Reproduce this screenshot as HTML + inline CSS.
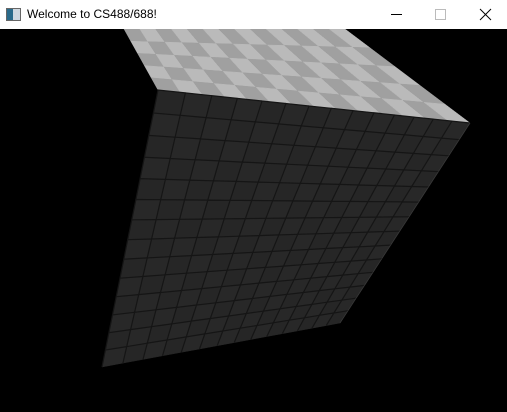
<!DOCTYPE html>
<html><head><style>
html,body{margin:0;padding:0;width:507px;height:412px;overflow:hidden;background:#000;font-family:"Liberation Sans",sans-serif}
#bar{position:absolute;left:0;top:0;width:507px;height:29px;background:#fff}
#bar .t{position:absolute;left:27px;top:7px;font-size:12px;color:#000}
#ic{position:absolute;left:6px;top:8px;width:13px;height:11px;border:1px solid #666;background:linear-gradient(90deg,#2a6a8a 0 45%,#cfd8e0 45%)}
svg{position:absolute;left:0;top:29px}
</style></head><body>
<div id="bar"><div id="ic"></div><div class="t">Welcome to CS488/688!</div>
<svg style="position:absolute;left:385px;top:0" width="120" height="29">
<line x1="6" y1="14.5" x2="17" y2="14.5" stroke="#000" stroke-width="1"/>
<rect x="50.5" y="9.5" width="10" height="10" fill="none" stroke="#bbb"/>
<line x1="95" y1="9" x2="106" y2="20" stroke="#000"/><line x1="106" y1="9" x2="95" y2="20" stroke="#000"/>
</svg></div>
<svg id="s" width="507" height="383" viewBox="0 29 507 383"></svg>
<script>
var s=document.getElementById('s'),h='';
function L(a,b,t){return[a[0]+(b[0]-a[0])*t,a[1]+(b[1]-a[1])*t]}
function pw(t,k){return t/(k-(k-1)*t)}
function face(p00,p10,p11,p01,n,m,ku,kv,c1,c2,st,sl){
 var P=function(u,v){u=pw(u,ku);v=pw(v,kv);return L(L(p00,p10,u),L(p01,p11,u),v)};
 for(var i=0;i<n;i++)for(var j=0;j<m;j++){
  var q=[P(i/n,j/m),P((i+1)/n,j/m),P((i+1)/n,(j+1)/m),P(i/n,(j+1)/m)];
  var f=function(x){return x[0].toFixed(1)+','+x[1].toFixed(1)};
  h+='<polygon points="'+q.map(f).join(' ')+'" fill="'+((i+j)%2?c1:c2)+'" stroke="'+((i+j)%2?c1:c2)+'" stroke-width="0.5"/>';
  if(st){h+='<polyline points="'+[q[3],q[0],q[1]].map(f).join(' ')+'" fill="none" stroke="'+st+'" stroke-width="1.2"/>';
   h+='<polyline points="'+[q[1],q[2]].map(f).join(' ')+'" fill="none" stroke="'+sl+'" stroke-width="0.8"/>';}
 }}
face([124,29],[345,29],[470,123],[158,90],14,5,1,1,'#bababa','#a0a0a0',null);
face([158,90],[470,123],[340,323],[102,367],14,14,0.8,0.85,'#282828','#262626','#151515','#383838');
s.innerHTML=h;
</script>
</body></html>
